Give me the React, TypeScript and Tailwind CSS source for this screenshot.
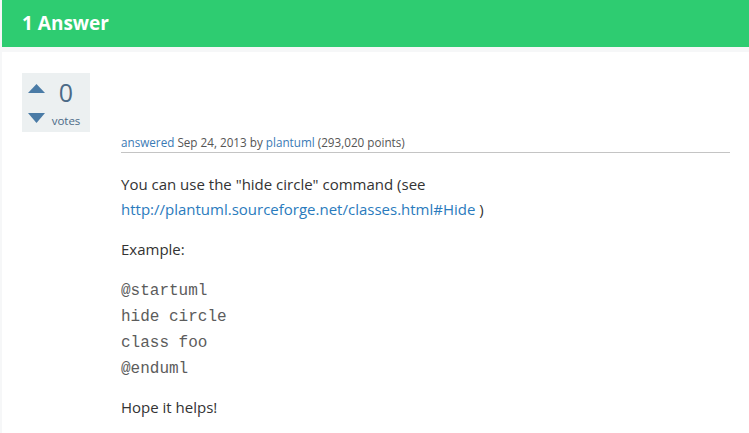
export default function App() {
  return (
    <div className="min-h-screen bg-[#f6f7f8] pl-[2px]" style={{ fontFamily: '"Open Sans", "Noto Sans", sans-serif' }}>
      <div className="h-[47px] bg-[#2ecc71] px-5 flex items-center">
        <h2 className="text-[19px] font-bold text-white leading-none -mt-[1px]">1 Answer</h2>
      </div>
      <div className="mt-[5px] bg-white min-h-[381px] pl-5 pr-[19px] pt-[21px] flex">
        <div className="w-[68px] h-[59px] bg-[#ecf0f1] flex shrink-0">
          <div className="w-[26px] flex flex-col items-center pt-[11px] pl-[3px]">
            <svg width="17" height="9" viewBox="0 0 17 9"><polygon points="8.5,0 17,9 0,9" fill="#4a7ba6" /></svg>
            <svg width="17" height="10" viewBox="0 0 17 10" className="mt-[20px]"><polygon points="0,0 17,0 8.5,10" fill="#4a7ba6" /></svg>
          </div>
          <div className="w-[36px] flex flex-col items-center text-[#4b6a87]">
            <span className="text-[25px] leading-none mt-[7px]">0</span>
            <span className="text-[11.5px] leading-none mt-[10px]">votes</span>
          </div>
        </div>
        <div className="flex-1 ml-[31px] pt-[62px]">
          <div className="text-[11.7px] text-[#555] border-b border-[#c4c4c4] pb-[3px] leading-[14px]">
            <a className="text-[#3a7ab5]">answered</a> Sep 24, 2013 by <a className="text-[#3a7ab5]">plantuml</a> (293,020 points)
          </div>
          <div className="text-[15px] text-[#333] leading-[25px] pt-[19px]">
            <p>
              You can use the "hide circle" command (see
              <br />
              <a className="text-[#2a7bbd]">http://plantuml.sourceforge.net/classes.html#Hide</a> )
            </p>
            <p className="mt-[15px]">Example:</p>
            <div className="mt-[16px] text-[16px] text-[#5c5c5c] leading-[26px]" style={{ fontFamily: '"Liberation Mono", "Courier New", monospace' }}>
              <div>@startuml</div>
              <div>hide circle</div>
              <div>class foo</div>
              <div>@enduml</div>
            </div>
            <p className="mt-[13px]">Hope it helps!</p>
          </div>
        </div>
      </div>
    </div>
  )
}
